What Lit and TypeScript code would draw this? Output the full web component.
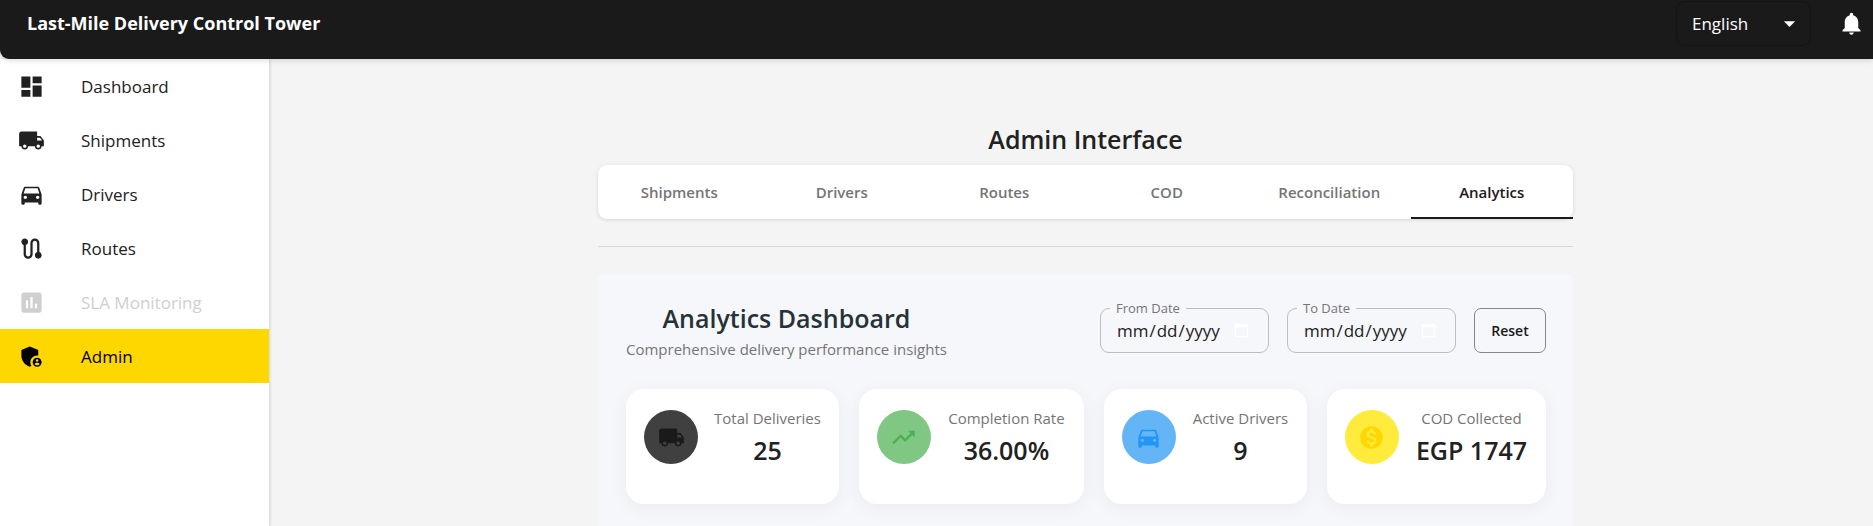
import { LitElement, html, css, svg } from "lit";
import { customElement, property, state } from "lit/decorators.js";
import { classMap } from "lit/directives/class-map.js";

const icons: Record<string, string> = {
  dashboard: "M3 13h8V3H3v10zm0 8h8v-6H3v6zm10 0h8V11h-8v10zm0-18v6h8V3h-8z",
  truck:
    "M20 8h-3V4H3c-1.1 0-2 .9-2 2v11h2c0 1.66 1.34 3 3 3s3-1.34 3-3h6c0 1.66 1.34 3 3 3s3-1.34 3-3h2v-5l-3-4zM6 18.5c-.83 0-1.5-.67-1.5-1.5s.67-1.5 1.5-1.5 1.5.67 1.5 1.5-.67 1.5-1.5 1.5zm13.5-9l1.96 2.5H17V9.5h2.5zm-1.5 9c-.83 0-1.5-.67-1.5-1.5s.67-1.5 1.5-1.5 1.5.67 1.5 1.5-.67 1.5-1.5 1.5z",
  car: "M18.92 6.01C18.72 5.42 18.16 5 17.5 5h-11c-.66 0-1.21.42-1.42 1.01L3 12v8c0 .55.45 1 1 1h1c.55 0 1-.45 1-1v-1h12v1c0 .55.45 1 1 1h1c.55 0 1-.45 1-1v-8l-2.08-5.99zM6.5 16c-.83 0-1.5-.67-1.5-1.5S5.67 13 6.5 13s1.5.67 1.5 1.5S7.33 16 6.5 16zm11 0c-.83 0-1.5-.67-1.5-1.5s.67-1.5 1.5-1.5 1.5.67 1.5 1.5-.67 1.5-1.5 1.5zM5 11l1.5-4.5h11L19 11H5z",
  route:
    "M19 15.18V7c0-2.21-1.79-4-4-4s-4 1.79-4 4v10c0 1.1-.9 2-2 2s-2-.9-2-2V8.82C8.16 8.4 9 7.3 9 6c0-1.66-1.34-3-3-3S3 4.34 3 6c0 1.3.84 2.4 2 2.82V17c0 2.21 1.79 4 4 4s4-1.79 4-4V7c0-1.1.9-2 2-2s2 .9 2 2v8.18c-1.16.41-2 1.51-2 2.82 0 1.66 1.34 3 3 3s3-1.34 3-3c0-1.3-.84-2.4-2-2.82z",
  chart:
    "M19 3H5c-1.1 0-2 .9-2 2v14c0 1.1.9 2 2 2h14c1.1 0 2-.9 2-2V5c0-1.1-.9-2-2-2zM9 17H7v-7h2v7zm4 0h-2V7h2v10zm4 0h-2v-4h2v4z",
  admin:
    "M17 11c.34 0 .67.04 1 .09V6.27L10.5 3 3 6.27v4.91c0 4.54 3.2 8.79 7.5 9.82.55-.13 1.08-.32 1.6-.55-.69-.98-1.1-2.17-1.1-3.45 0-3.31 2.69-6 6-6zM17 13c-2.21 0-4 1.79-4 4s1.79 4 4 4 4-1.79 4-4-1.79-4-4-4zm0 1.38c.62 0 1.12.51 1.12 1.12s-.51 1.12-1.12 1.12-1.12-.51-1.12-1.12.5-1.12 1.12-1.12zm0 5.37c-.93 0-1.74-.46-2.24-1.17.05-.72 1.51-1.08 2.24-1.08s2.19.36 2.24 1.08c-.5.71-1.31 1.17-2.24 1.17z",
  trend: "M16 6l2.29 2.29-4.88 4.88-4-4L2 16.59 3.41 18l6-6 4 4 6.3-6.29L22 12V6z",
  money:
    "M12 2C6.48 2 2 6.48 2 12s4.48 10 10 10 10-4.48 10-10S17.52 2 12 2zm1.41 16.09V20h-2.67v-1.93c-1.71-.36-3.16-1.46-3.27-3.4h1.96c.1 1.05.82 1.87 2.65 1.87 1.96 0 2.4-.98 2.4-1.59 0-.83-.44-1.61-2.67-2.14-2.48-.6-4.18-1.62-4.18-3.67 0-1.72 1.39-2.84 3.11-3.21V4h2.67v1.95c1.86.45 2.79 1.86 2.85 3.39H14.3c-.05-1.11-.64-1.87-2.22-1.87-1.5 0-2.4.68-2.4 1.64 0 .84.65 1.39 2.67 1.91s4.18 1.39 4.18 3.91c-.01 1.83-1.38 2.83-3.12 3.16z",
  bell: "M12 22c1.1 0 2-.9 2-2h-4c0 1.1.89 2 2 2zm6-6v-5c0-3.07-1.64-5.64-4.5-6.32V4c0-.83-.67-1.5-1.5-1.5s-1.5.67-1.5 1.5v.68C7.63 5.36 6 7.92 6 11v5l-2 2v1h16v-1l-2-2z",
  arrow: "M7 10l5 5 5-5z",
};

@customElement("ui-icon")
class UiIcon extends LitElement {
  @property() name = "";

  static styles = css`
    :host {
      display: block;
      flex: none;
      width: 27px;
      height: 27px;
    }
    .glyph {
      display: block;
      width: 100%;
      height: 100%;
      fill: currentColor;
    }
  `;

  render() {
    return html`<svg class="glyph" viewBox="0 0 24 24" aria-hidden="true">
      ${svg`<path d=${icons[this.name] ?? ""}></path>`}
    </svg>`;
  }
}

@customElement("stat-card")
class StatCard extends LitElement {
  @property() icon = "";
  @property() label = "";
  @property() value = "";
  @property() tone = "dark";

  static styles = css`
    :host {
      display: flex;
      align-items: flex-start;
      gap: 16px;
      box-sizing: border-box;
      padding: 17px 18px 36px;
      border-radius: 18px;
      background: #fff;
      box-shadow: 0 4px 20px rgba(0, 0, 0, 0.05);
    }
    .badge {
      flex: none;
      display: grid;
      place-items: center;
      width: 54px;
      height: 54px;
      margin-top: 4px;
      border-radius: 50%;
    }
    .dark { background: #404040; color: #1a1a1a; }
    .green { background: #81c784; color: #4caf50; }
    .blue { background: #64b5f6; color: #2196f3; }
    .yellow { background: #ffeb3b; color: #ffd700; }
    .text {
      flex: 1;
      text-align: center;
      white-space: nowrap;
    }
    .label {
      font-size: 15px;
      line-height: 24px;
      color: #757575;
    }
    .value {
      font-size: 25px;
      line-height: 36px;
      padding-top: 2px;
      font-weight: 600;
      color: #212121;
    }
  `;

  render() {
    return html`
      <div class=${classMap({ badge: true, [this.tone]: true })}>
        <ui-icon name=${this.icon}></ui-icon>
      </div>
      <div class="text">
        <div class="label">${this.label}</div>
        <div class="value">${this.value}</div>
      </div>
    `;
  }
}

@customElement("app-root")
class AppRoot extends LitElement {
  @state() tab = "Analytics";
  @state() from = "";
  @state() to = "";

  private nav = [
    { icon: "dashboard", label: "Dashboard" },
    { icon: "truck", label: "Shipments" },
    { icon: "car", label: "Drivers" },
    { icon: "route", label: "Routes" },
    { icon: "chart", label: "SLA Monitoring", disabled: true },
    { icon: "admin", label: "Admin", active: true },
  ];

  private tabs = ["Shipments", "Drivers", "Routes", "COD", "Reconciliation", "Analytics"];

  private stats = [
    { icon: "truck", label: "Total Deliveries", value: "25", tone: "dark" },
    { icon: "trend", label: "Completion Rate", value: "36.00%", tone: "green" },
    { icon: "car", label: "Active Drivers", value: "9", tone: "blue" },
    { icon: "money", label: "COD Collected", value: "EGP 1747", tone: "yellow" },
  ];

  static styles = css`
    :host {
      display: flex;
      flex-direction: column;
      height: 100vh;
      overflow: hidden;
      background: #f4f4f4;
      color: #212121;
      font-family: "Open Sans", "Noto Sans", sans-serif;
      font-size: 17px;
    }
    *,
    *::before {
      box-sizing: border-box;
    }
    button,
    select,
    input {
      font: inherit;
      color: inherit;
    }
    .topbar {
      position: relative;
      z-index: 2;
      flex: none;
      display: flex;
      align-items: flex-start;
      justify-content: space-between;
      padding: 1px 8px 13px 27px;
      border-bottom-left-radius: 9px;
      background: #1a1a1a;
      color: #fff;
      box-shadow: 0 2px 5px rgba(0, 0, 0, 0.12);
    }
    .brand {
      margin: 0;
      font-size: 18px;
      line-height: 45px;
      font-weight: 700;
    }
    .tools {
      display: flex;
      align-items: center;
      gap: 27px;
    }
    .language {
      display: grid;
      align-items: center;
      width: 135px;
    }
    .language > * {
      grid-area: 1 / 1;
    }
    .language ui-icon {
      justify-self: end;
      margin-right: 8px;
      pointer-events: none;
    }
    .select {
      width: 100%;
      height: 45px;
      padding: 0 36px 0 15px;
      border: 1px solid #141414;
      border-radius: 9px;
      background: #1a1a1a;
      appearance: none;
    }
    .bell {
      padding: 0;
      border: 0;
      background: none;
    }
    .body {
      flex: 1;
      display: flex;
      min-height: 0;
    }
    .sidebar {
      flex: none;
      width: 269px;
      background: #fff;
      box-shadow: 1px 0 3px rgba(0, 0, 0, 0.14);
    }
    .link {
      display: flex;
      align-items: center;
      gap: 36px;
      height: 54px;
      padding: 0 18px;
      color: inherit;
      text-decoration: none;
    }
    .link.active {
      background: #ffd700;
      color: #000;
    }
    .link.disabled {
      color: #cfcfcf;
    }
    .main {
      flex: 1;
      min-width: 0;
      padding: 60px 0 0 29px;
    }
    .content {
      max-width: 975px;
      margin: 0 auto;
    }
    .title {
      margin: 0 0 5px;
      font-size: 25px;
      line-height: 41px;
      font-weight: 600;
      text-align: center;
    }
    .tabs {
      display: flex;
      border-radius: 9px;
      background: #fff;
      box-shadow: 0 1px 4px rgba(0, 0, 0, 0.12);
    }
    .tab {
      flex: 1 1 0;
      height: 54px;
      padding: 2px 0 0;
      border: 0;
      border-bottom: 2px solid transparent;
      background: none;
      font-size: 15px;
      font-weight: 600;
      color: #757575;
    }
    .tab.active {
      border-bottom-color: #1a1a1a;
      color: #1a1a1a;
    }
    .rule {
      height: 1px;
      margin: 27px 0;
      border: 0;
      background: #d5d6d6;
    }
    .panel {
      min-height: 300px;
      padding: 25px 27px 27px 28px;
      border-radius: 4px;
      background: #f5f7fb;
    }
    .head {
      display: flex;
      justify-content: space-between;
      align-items: flex-end;
      margin-bottom: 26px;
    }
    .intro {
      text-align: center;
    }
    .heading {
      margin: 0;
      font-size: 25px;
      line-height: 36px;
      font-weight: 600;
      color: #263238;
    }
    .sub {
      margin: 0;
      font-size: 15px;
      line-height: 27px;
      color: #757575;
    }
    .filters {
      display: flex;
      align-items: flex-end;
      gap: 18px;
      padding-bottom: 10px;
    }
    .field {
      width: 169px;
      margin: 0;
      min-width: 0;
      padding: 0 16px 8px 9px;
      border: 1px solid #bcbdc0;
      border-radius: 9px;
    }
    .legend {
      padding: 0 6px;
      font-size: 13px;
      line-height: 18px;
      color: #757575;
    }
    .date {
      display: block;
      width: 100%;
      height: 27px;
      padding: 0 0 0 6px;
      border: 0;
      background: none;
      font-size: 17px;
    }
    .date::-webkit-calendar-picker-indicator {
      filter: invert(1);
      margin-left: 0;
    }
    .reset {
      width: 72px;
      height: 45px;
      padding: 0;
      border: 1px solid #84868a;
      border-radius: 7px;
      background: none;
      font-size: 14px;
      font-weight: 600;
      color: #1a1a1a;
    }
    .stats {
      display: grid;
      grid-template-columns: 212fr 225fr 203fr 219fr;
      gap: 20px;
    }
  `;

  private clear() {
    this.from = "";
    this.to = "";
  }

  render() {
    return html`
      <header class="topbar">
        <h1 class="brand">Last-Mile Delivery Control Tower</h1>
        <div class="tools">
          <div class="language">
            <select class="select" aria-label="Language">
              <option>English</option>
            </select>
            <ui-icon name="arrow"></ui-icon>
          </div>
          <button class="bell" aria-label="Notifications"><ui-icon name="bell"></ui-icon></button>
        </div>
      </header>
      <div class="body">
        <nav class="sidebar">
          ${this.nav.map(
            (n) => html`<a
              class=${classMap({ link: true, active: !!n.active, disabled: !!n.disabled })}
              href="#"
              aria-disabled=${n.disabled ? "true" : "false"}
              ><ui-icon name=${n.icon}></ui-icon><span>${n.label}</span></a
            >`
          )}
        </nav>
        <main class="main">
          <div class="content">
            <h2 class="title">Admin Interface</h2>
            <div class="tabs" role="tablist">
              ${this.tabs.map(
                (t) => html`<button
                  role="tab"
                  aria-selected=${t === this.tab ? "true" : "false"}
                  class=${classMap({ tab: true, active: t === this.tab })}
                  @click=${() => (this.tab = t)}
                >${t}</button>`
              )}
            </div>
            <hr class="rule" />
            <section class="panel">
              <div class="head">
                <div class="intro">
                  <h3 class="heading">Analytics Dashboard</h3>
                  <p class="sub">Comprehensive delivery performance insights</p>
                </div>
                <div class="filters">
                  <fieldset class="field">
                    <legend class="legend"><label for="from">From Date</label></legend>
                    <input class="date" id="from" type="date" .value=${this.from}
                      @change=${(e: Event) => (this.from = (e.target as HTMLInputElement).value)} />
                  </fieldset>
                  <fieldset class="field">
                    <legend class="legend"><label for="to">To Date</label></legend>
                    <input class="date" id="to" type="date" .value=${this.to}
                      @change=${(e: Event) => (this.to = (e.target as HTMLInputElement).value)} />
                  </fieldset>
                  <button class="reset" @click=${this.clear}>Reset</button>
                </div>
              </div>
              <div class="stats">
                ${this.stats.map(
                  (s) => html`<stat-card icon=${s.icon} label=${s.label} value=${s.value} tone=${s.tone}></stat-card>`
                )}
              </div>
            </section>
          </div>
        </main>
      </div>
    `;
  }
}
